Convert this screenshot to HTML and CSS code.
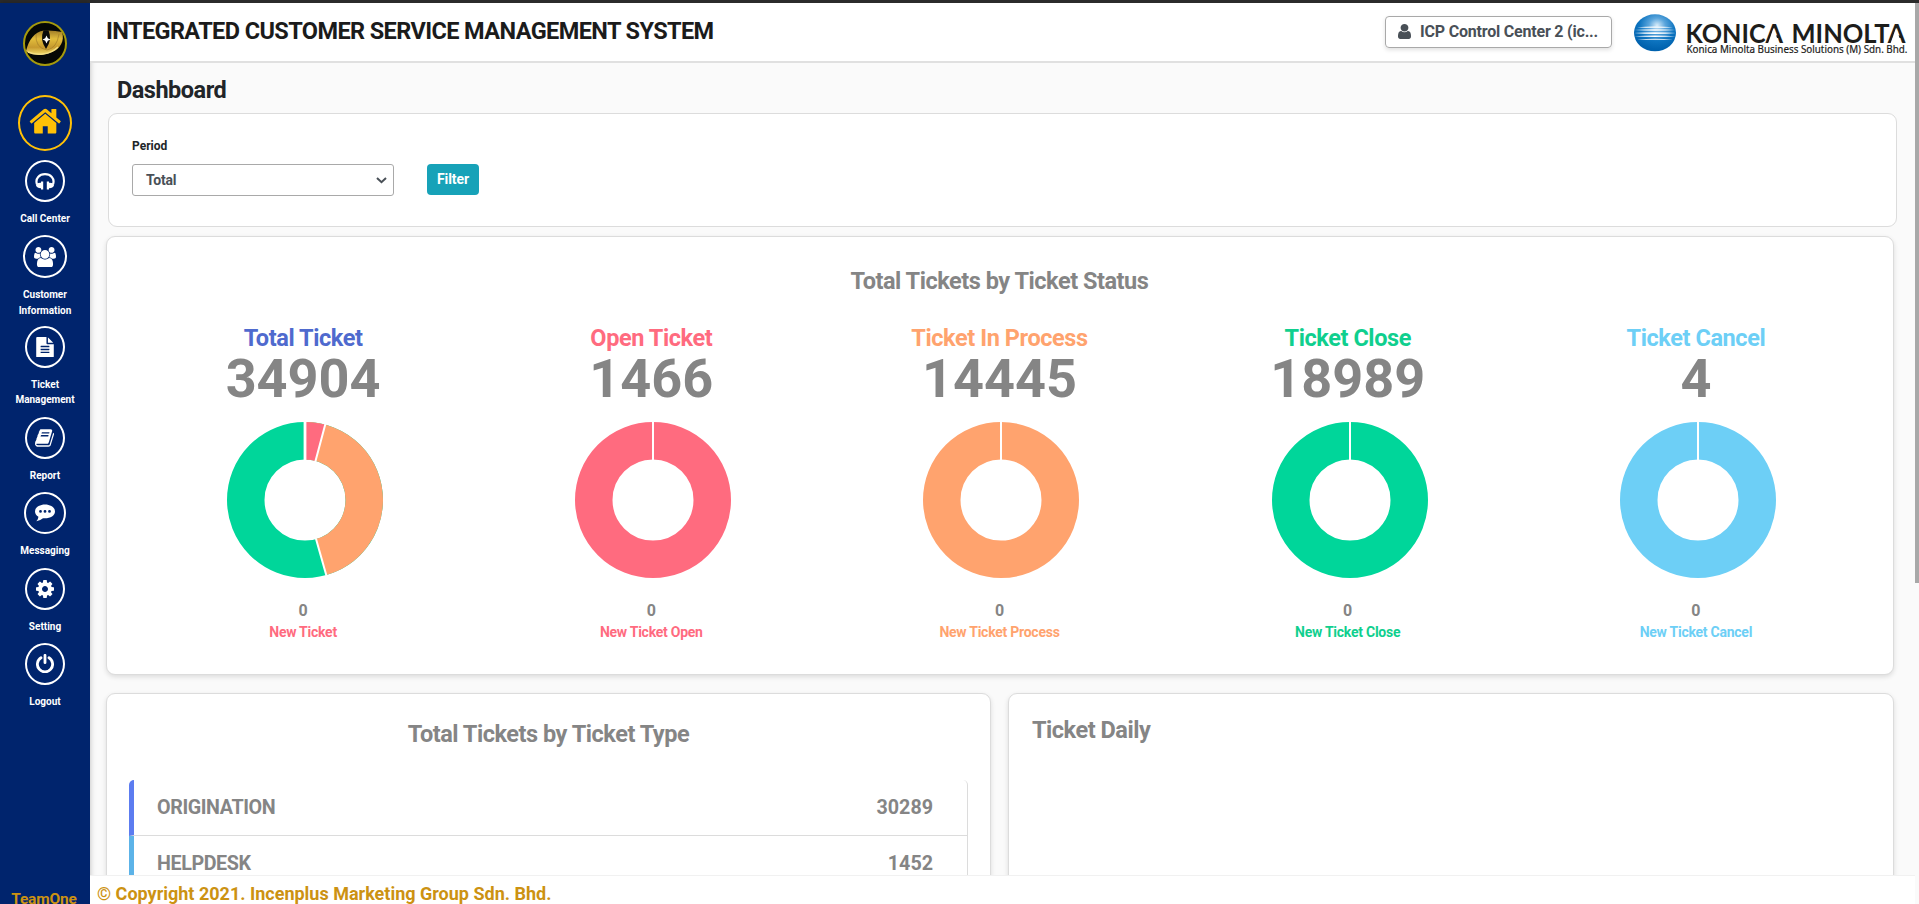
FILE: index.html
```
<!DOCTYPE html>
<html lang="en">
<head>
<meta charset="utf-8">
<title>Integrated Customer Service Management System</title>
<link rel="stylesheet" href="styles.css">
</head>
<body>
<div class="top-strip"></div>
<div class="shell">
  <aside class="sidebar">
    <svg class="brand" viewBox="0 0 44 45">
      <defs>
        <linearGradient id="gold" x1="0" y1="0" x2="0" y2="1">
          <stop offset="0" stop-color="#a07c28"/><stop offset=".35" stop-color="#e2bd3c"/><stop offset=".7" stop-color="#c79a2e"/><stop offset="1" stop-color="#f0dc6a"/>
        </linearGradient>
      </defs>
      <ellipse cx="22" cy="22.500" rx="21" ry="21.500" fill="#050805" stroke="#a59a0c" stroke-width="2"/>
      <path d="M3 30C6 19 11 11 21 9.500Q31 9 39 11C42 20 37 28 29 31C21 34.500 12 34.500 4 31Z" fill="url(#gold)"/>
      <path d="M13 13Q12 27 24 29Q34 27 36 13" fill="none" stroke="#9a7626" stroke-width=".6"/>
      <path d="M5 31C14 35 27 34 35 26" fill="none" stroke="#f3df83" stroke-width="1.500"/>
      <path d="M20.500 9.300Q16.500 19 23 28Q29.500 19 25.500 9.300Z" fill="#0a0a0a"/>
      <path d="M23.500 14.500l1.300 2.700 2.700 1.300-2.700 1.300-1.300 2.700-1.300-2.700-2.700-1.300 2.700-1.300z" fill="#fff"/>
    </svg>
    <nav class="menu">
      <a class="item home"><span class="ring"><svg width="34.500" height="34.500" viewBox="0 0 1792 1792"><path d="M1472 992v480q0 26-19 45t-45 19h-384v-384h-256v384h-384q-26 0-45-19t-19-45v-480q0-1 .5-3t.5-3l575-474 575 474q1 2 1 6zm223-69l-62 74q-8 9-21 11h-3q-13 0-21-7l-692-577-692 577q-12 8-24 7-13-2-21-11l-62-74q-8-10-7-23.500t11-21.500l719-599q32-26 76-26t76 26l244 204v-195q0-14 9-23t23-9h192q14 0 23 9t9 23v408l219 182q10 8 11 21.500t-7 23.500z"/></svg></span></a>
      <a class="item"><span class="ring"><svg width="20" height="17" viewBox="0 0 20 17"><path d="M2 11.500C-.2 5 4.700 1.200 10 1.200S20.200 5 18 11.500" fill="none" stroke="#fff" stroke-width="2.200"/><path d="M8.200 8.500v8H6v-1.200C3 15 1 13.800 1 12.200 1 10.500 3 9.500 6 9.700V8.500zM11.800 8.500v8H14v-1.200c3-.3 5-1.500 5-3.100 0-1.700-2-2.700-5-2.500V8.500z"/></svg></span><span class="label">Call Center</span></a>
      <a class="item wide"><span class="ring"><svg width="22" height="20.500" viewBox="64 0 1920 1792"><path d="M657 896q-162 5-265 128h-134q-82 0-138-40.500t-56-118.500q0-353 124-353 6 0 43.500 21t97.500 42.500 119 21.500q67 0 133-23-5 37-5 66 0 139 81 256zm1071 637q0 120-73 189.500t-194 69.500h-874q-121 0-194-69.500t-73-189.500q0-53 3.500-103.500t14-109 26.500-108.500 43-97.500 62-81 85.500-53.500 111.500-20q10 0 43 21.500t73 48 107 48 135 21.500 135-21.500 107-48 73-48 43-21.500q61 0 111.500 20t85.500 53.500 62 81 43 97.500 26.500 108.500 14 109 3.500 103.500zm-1024-1277q0 106-75 181t-181 75-181-75-75-181 75-181 181-75 181 75 75 181zm704 384q0 159-112.500 271.500t-271.500 112.500-271.500-112.500-112.500-271.500 112.500-271.500 271.500-112.500 271.500 112.500 112.500 271.500zm576 225q0 78-56 118.500t-138 40.500h-134q-103-123-265-128 81-117 81-256 0-29-5-66 66 23 133 23 59 0 119-21.500t97.500-42.500 43.500-21q124 0 124 353zm-128-609q0 106-75 181t-181 75-181-75-75-181 75-181 181-75 181 75 75 181z"/></svg></span><span class="label">Customer<br>Information</span></a>
      <a class="item double"><span class="ring"><svg width="18" height="20.500" viewBox="128 0 1536 1792"><path d="M1596 476q14 14 28 36h-472v-472q22 14 36 28zm-476 164h544v1056q0 40-28 68t-68 28h-1344q-40 0-68-28t-28-68v-1600q0-40 28-68t68-28h800v544q0 40 28 68t68 28zm160 736v-64q0-14-9-23t-23-9h-704q-14 0-23 9t-9 23v64q0 14 9 23t23 9h704q14 0 23-9t9-23zm0-256v-64q0-14-9-23t-23-9h-704q-14 0-23 9t-9 23v64q0 14 9 23t23 9h704q14 0 23-9t9-23zm0-256v-64q0-14-9-23t-23-9h-704q-14 0-23 9t-9 23v64q0 14 9 23t23 9h704q14 0 23-9t9-23z"/></svg></span><span class="label">Ticket<br>Management</span></a>
      <a class="item"><span class="ring"><svg width="19" height="18" viewBox="64 128 1664 1536"><path d="M1703 478q40 57 18 129l-275 906q-19 64-76.500 107.500t-122.500 43.500h-923q-77 0-148.500-53.500t-99.500-131.500q-24-67-2-127 0-4 3-27t4-37q1-8-3-21.500t-3-19.500q2-11 8-21t16.500-23.500 16.500-23.500q23-38 45-91.500t30-91.500q3-10 .5-30t-.5-28q3-11 17-28t17-23q21-36 42-92t25-90q1-9-2.500-32t.5-28q4-13 22-30.500t22-22.500q19-26 42.500-84.500t27.500-96.500q1-8-3-25.500t-2-26.500q2-8 9-18t18-23 17-21q8-12 16.500-30.500t15-35 16-36 19.500-32 26.500-23.500 36-11.500 47.500 5.500l-1 3q38-9 51-9h761q74 0 114 56t18 130l-274 906q-36 119-71.500 153.500t-128.500 34.500h-869q-27 0-38 15-11 16-1 43 24 70 144 70h923q29 0 56-15.500t35-41.500l300-987q7-22 5-57 38 15 59 43zm-1064 2q-4 13 2 22.500t20 9.500h608q13 0 25.500-9.500t16.500-22.500l21-64q4-13-2-22.500t-20-9.500h-608q-13 0-25.500 9.500t-16.500 22.500zm-83 256q-4 13 2 22.500t20 9.500h608q13 0 25.500-9.500t16.500-22.500l21-64q4-13-2-22.500t-20-9.500h-608q-13 0-25.500 9.500t-16.500 22.500z"/></svg></span><span class="label">Report</span></a>
      <a class="item mid"><span class="ring"><svg width="20" height="18" viewBox="0 0 20 18"><path fill-rule="evenodd" d="M10 .5c5.500 0 10 3 10 6.900s-4.500 6.900-10 6.900q-1 0-2-.1Q5 16.700 1.300 17.200C2.600 15.800 3.200 14.600 3.400 12.700 1.300 11.400 0 9.500 0 7.400 0 3.500 4.500.5 10 .5zM5.500 6A1.400 1.400 0 1 0 5.500 8.800 1.400 1.400 0 1 0 5.500 6zM10 6A1.400 1.400 0 1 0 10 8.800 1.400 1.400 0 1 0 10 6zM14.500 6A1.400 1.400 0 1 0 14.500 8.800 1.400 1.400 0 1 0 14.500 6z"/></svg></span><span class="label">Messaging</span></a>
      <a class="item"><span class="ring"><svg width="18" height="18" viewBox="128 128 1536 1536"><path d="M1152 896q0-106-75-181t-181-75-181 75-75 181 75 181 181 75 181-75 75-181zm512-109v222q0 12-8 23t-20 13l-185 28q-19 54-39 91 35 50 107 138 10 12 10 25t-9 23q-27 37-99 108t-94 71q-12 0-26-9l-138-108q-44 23-91 38-16 136-29 186-7 28-36 28h-222q-14 0-24.500-8.500t-11.500-21.500l-28-184q-49-16-90-37l-141 107q-10 9-25 9-14 0-25-11-126-114-165-168-7-10-7-23 0-12 8-23 15-21 51-66.500t54-70.500q-27-50-41-99l-183-27q-13-2-21-12.500t-8-23.500v-222q0-12 8-23t19-13l186-28q14-46 39-92-40-57-107-138-10-12-10-24 0-10 9-23 26-36 98.500-107.500t94.500-71.500q13 0 26 10l138 107q44-23 91-38 16-136 29-186 7-28 36-28h222q14 0 24.500 8.500t11.500 21.500l28 184q49 16 90 37l142-107q9-9 24-9 13 0 25 10 129 119 165 170 7 8 7 22 0 12-8 23-15 21-51 66.500t-54 70.500q26 50 41 98l183 28q13 2 21 12.500t8 23.500z"/></svg></span><span class="label">Setting</span></a>
      <a class="item"><span class="ring"><svg width="18" height="19" viewBox="0 0 18 19"><path d="M5 3.800A7.600 7.600 0 1 0 13 3.800M9 1.300v7.400" fill="none" stroke="#fff" stroke-width="2.800" stroke-linecap="round"/></svg></span><span class="label">Logout</span></a>
    </nav>
    <div class="team">TeamOne</div>
  </aside>

  <main class="main">
    <header class="header">
      <h1 class="app-title">INTEGRATED CUSTOMER SERVICE MANAGEMENT SYSTEM</h1>
      <div class="account">
        <svg width="13" height="15" viewBox="256 128 1280 1536" preserveAspectRatio="none"><path d="M1536 1399q0 109-62.500 187t-150.500 78h-854q-88 0-150.500-78t-62.500-187q0-85 8.500-160.500t31.500-152 58.500-131 94-89 134.500-34.500q131 128 313 128t313-128q76 0 134.500 34.500t94 89 58.500 131 31.500 152 8.500 160.500zm-256-887q0 159-112.500 271.500t-271.500 112.500-271.500-112.500-112.500-271.500 112.500-271.500 271.500-112.500 271.500 112.500 112.500 271.500z"/></svg>
        <span>ICP Control Center 2 (ic...</span>
      </div>
      <svg class="company" width="276" height="48" viewBox="0 0 276 48">
        <defs>
          <radialGradient id="globe" cx=".55" cy=".3" r=".65">
            <stop offset="0" stop-color="#d8ecfa"/><stop offset=".3" stop-color="#5aa5dc"/><stop offset=".65" stop-color="#0d74c0"/><stop offset="1" stop-color="#0062ae"/>
          </radialGradient>
        </defs>
        <ellipse cx="21" cy="19.800" rx="21" ry="18.500" fill="url(#globe)"/>
        <g fill="#fff"><path d="M3 14.200Q21 12.800 39 14.200Q21 15.200 3 14.200ZM.6 17.100Q21 15.600 41.400 17.100Q21 18.500 .6 17.100ZM0 20.100Q21 18.400 42 20.100Q21 21.800 0 20.100ZM.6 23.200Q21 21.800 41.400 23.200Q21 24.600 .6 23.200ZM3 26.200Q21 25.200 39 26.200Q21 27.400 3 26.200Z"/></g>
        <text class="company-name" x="51.500" y="29.500" textLength="97.500" lengthAdjust="spacingAndGlyphs">KONICA</text>
        <text class="company-name" x="157.500" y="29.500" textLength="114" lengthAdjust="spacingAndGlyphs">MINOLTA</text>
        <path fill="#fff" d="M139.500 15L144.800 30H134.200ZM262 15L267.300 30H256.700Z"/>
        <text class="company-sub" x="52.500" y="39.500" textLength="221" lengthAdjust="spacingAndGlyphs">Konica Minolta Business Solutions (M) Sdn. Bhd.</text>
      </svg>
    </header>

    <div class="content">
      <h2 class="page-title">Dashboard</h2>
      <section class="card filter">
        <div class="field">
          <label class="field-label">Period</label>
          <div class="select">Total<svg width="11" height="7" viewBox="0 0 11 7"><path d="M1 1l4.500 4.200L10 1" fill="none" stroke="#495057" stroke-width="2"/></svg></div>
        </div>
        <button class="filter-btn">Filter</button>
      </section>

      <section class="card status">
        <h3 class="card-title">Total Tickets by Ticket Status</h3>
        <div class="stats">
          <div class="stat">
            <div class="name blue">Total Ticket</div><div class="num">34904</div>
            <svg class="donut" viewBox="-80 -80 160 160">
              <g transform="rotate(-90)">
                <circle class="arc s-green" r="59.250" pathLength="34904"/>
                <circle class="arc s-orange" r="59.250" pathLength="34904" stroke-dasharray="15911 34904"/>
                <circle class="arc s-red" r="59.250" pathLength="34904" stroke-dasharray="1466 34904"/>
              </g>
              <path class="cut" d="M10.300-38.200L20.700-77.300M10.900 38.500L21.800 77"/><path class="cut thick" d="M0-39V-79"/>
            </svg>
            <div class="new">0</div><div class="new-label red">New Ticket</div>
          </div>
          <div class="stat">
            <div class="name red">Open Ticket</div><div class="num">1466</div>
            <svg class="donut" viewBox="-80 -80 160 160"><circle class="arc s-red" r="59.250"/><path class="cut" d="M0-39V-79"/></svg>
            <div class="new">0</div><div class="new-label red">New Ticket Open</div>
          </div>
          <div class="stat">
            <div class="name orange">Ticket In Process</div><div class="num">14445</div>
            <svg class="donut" viewBox="-80 -80 160 160"><circle class="arc s-orange" r="59.250"/><path class="cut" d="M0-39V-79"/></svg>
            <div class="new">0</div><div class="new-label orange">New Ticket Process</div>
          </div>
          <div class="stat">
            <div class="name green">Ticket Close</div><div class="num">18989</div>
            <svg class="donut" viewBox="-80 -80 160 160"><circle class="arc s-green" r="59.250"/><path class="cut" d="M0-39V-79"/></svg>
            <div class="new">0</div><div class="new-label green">New Ticket Close</div>
          </div>
          <div class="stat">
            <div class="name sky">Ticket Cancel</div><div class="num">4</div>
            <svg class="donut" viewBox="-80 -80 160 160"><circle class="arc s-sky" r="59.250"/><path class="cut" d="M0-39V-79"/></svg>
            <div class="new">0</div><div class="new-label sky">New Ticket Cancel</div>
          </div>
        </div>
      </section>

      <div class="columns">
        <section class="card types">
          <h3 class="card-title">Total Tickets by Ticket Type</h3>
          <ul class="type-list">
            <li class="type indigo"><span class="type-name">ORIGINATION</span><span>30289</span></li>
            <li class="type cyan"><span class="type-name">HELPDESK</span><span>1452</span></li>
          </ul>
        </section>
        <section class="card daily"><h3 class="card-title">Ticket Daily</h3></section>
      </div>
    </div>
    <footer class="footer">© Copyright 2021. Incenplus Marketing Group Sdn. Bhd.</footer>
  </main>
  <div class="scrollbar"><div class="thumb"></div></div>
</div>
</body>
</html>
```
FILE: styles.css
```
* { box-sizing: border-box; }
body { margin: 0; height: 904px; overflow: hidden; display: flex; flex-direction: column; font-family: Roboto, "Liberation Sans", sans-serif; font-weight: 500; background: #fafafa; color: #212529; }
h1, h2, h3, ul { margin: 0; padding: 0; }
svg { display: block; flex: none; }

.top-strip { height: 3px; background: #2b2b2b; flex: none; }
.shell { flex: 1; min-height: 0; display: flex; }

.sidebar { width: 90px; flex: none; background: #00246d; color: #fff; display: flex; flex-direction: column; align-items: center; padding-top: 18px; box-shadow: 0 0 6px rgba(0, 0, 0, .25); overflow: hidden; }
.brand { width: 44px; height: 45px; }
.menu { margin-top: 29px; display: flex; flex-direction: column; align-items: center; gap: 9px; fill: #fff; flex: 1; }
.item { display: flex; flex-direction: column; align-items: center; }
.ring { width: 40px; height: 42px; border: 2px solid #fff; border-radius: 50%; display: flex; align-items: center; justify-content: center; }
.home .ring { width: 54px; height: 56px; border-color: #ffc107; fill: #ffc107; padding-bottom: 3px; }
.wide { margin-bottom: -1px; }
.double { margin-bottom: .6px; }
.wide .ring { width: 44px; height: 43px; }
.mid .ring { width: 42px; }
.label { margin-top: 9px; font-size: 10px; font-weight: 700; line-height: 15.300px; text-align: center; }
.team { flex: none; height: 14px; font-size: 15.500px; font-weight: 700; letter-spacing: -.15px; line-height: 19px; margin-right: 2px; color: #cc9212; }

.main { flex: 1; min-width: 0; display: flex; flex-direction: column; }
.header { height: 60px; flex: none; background: #fff; border-bottom: 2px solid #e0e0e0; display: flex; align-items: flex-start; padding: 0 5px 0 16px; }
.app-title { flex: 1; font-size: 23.500px; font-weight: 700; letter-spacing: -.6px; line-height: 28px; color: #1b1b1b; margin-top: 14px; white-space: nowrap; }
.account { width: 227px; height: 32px; margin: 13px 22px 0 0; border: 1px solid #a9a9a9; border-radius: 4px; box-shadow: 0 2px 4px rgba(0, 0, 0, .12); display: flex; align-items: center; padding: 0 0 1px 12px; gap: 9px; font-size: 16px; font-weight: 700; letter-spacing: -.2px; color: #495057; fill: #495057; white-space: nowrap; }
.company { margin-top: 10px; }
.company-name { font-family: Lato, sans-serif; font-weight: 700; font-size: 26px; fill: #1d1d1b; }
.company-sub { font-family: "Noto Sans", sans-serif; font-weight: 400; font-size: 10.500px; fill: #1d1d1b; stroke: #1d1d1b; stroke-width: .2px; }

.content { flex: 1; min-height: 0; overflow: hidden; padding: 13px 21px 0 16px; }
.page-title { font-size: 23.500px; letter-spacing: -.5px; line-height: 28px; padding-left: 11px; }
.card { background: #fff; border: 1px solid #dcdcdc; border-radius: 9px; }
.filter { height: 114px; margin: 9px -3px 0 2px; padding: 50px 23px 0; display: flex; gap: 33px; }
.field { width: 262px; margin-top: -26px; }
.field-label { display: block; font-size: 12px; font-weight: 700; line-height: 16px; }
.select { margin-top: 10px; height: 32px; border: 1px solid #a9a9a9; border-radius: 3px; display: flex; align-items: center; justify-content: space-between; padding: 0 6px 0 13px; font-size: 14px; font-weight: 700; letter-spacing: -.2px; color: #495057; }
.filter-btn { width: 52px; height: 31px; border: 0; padding: 0; border-radius: 4px; background: #17a2b8; color: #fff; font: 700 14px/31px Roboto, sans-serif; letter-spacing: -.1px; }

.status, .types, .daily { box-shadow: 0 2px 5px rgba(0, 0, 0, .12); color: #858585; }
.status { height: 439px; margin-top: 9px; padding: 30px 23px 0 22px; }
.card-title { font-size: 23.500px; letter-spacing: -.47px; line-height: 28px; text-align: center; }
.stats { display: grid; grid-template-columns: repeat(5, 1fr); margin-top: 29px; text-align: center; }
.stat { display: flex; flex-direction: column; align-items: center; }
.name { font-size: 23.500px; font-weight: 700; letter-spacing: -.42px; line-height: 29px; }
.num { font-size: 54px; line-height: 52px; font-weight: 700; }
.donut { width: 160px; height: 160px; margin: 15px -4px 0 0; }
.new { font-size: 16px; font-weight: 700; line-height: 20px; margin-top: 21px; }
.new-label { font-size: 14px; font-weight: 700; letter-spacing: -.25px; line-height: 20px; margin-top: 1px; }
.arc { fill: none; stroke-width: 37.500; }
.cut { fill: none; stroke: #fff; stroke-width: 2; }
.thick { stroke-width: 2.800; }
.s-green { stroke: #00d69a; } .s-orange { stroke: #ffa36e; } .s-red { stroke: #ff6b7f; } .s-sky { stroke: #6dcff6; }
.blue { color: #4f6ace; } .red { color: #ff6b7f; } .orange { color: #ffa36e; } .green { color: #10cf8e; } .sky { color: #6dcff6; }

.columns { display: grid; grid-template-columns: 885px 886px; gap: 17px; margin-top: 18px; }
.types, .daily { height: 400px; }
.types { padding: 26px 22px 0; }
.daily { padding: 22px 23px 0; }
.daily .card-title { text-align: left; }
.type-list { list-style: none; margin-top: 32px; border-right: 1px solid #dcdcdc; border-radius: 5px; overflow: hidden; }
.type { height: 56px; border-left: 5px solid; border-bottom: 1px solid #dcdcdc; display: flex; justify-content: space-between; align-items: center; padding: 0 34px 0 23px; font-size: 19.700px; font-weight: 700; }
.type-name { letter-spacing: -.4px; }
.type span { color: #858585; }
.indigo { border-left-color: #5c7cf0; } .cyan { border-left-color: #5cb3e8; }

.footer { height: 29px; flex: none; background: #fff; border-top: 1px solid #f1f1f1; padding: 0 7px; font-size: 18px; font-weight: 700; line-height: 35px; color: #cc9212; }
.scrollbar { width: 4px; flex: none; }
.thumb { height: 580px; background: #a8a8a8; }
```
